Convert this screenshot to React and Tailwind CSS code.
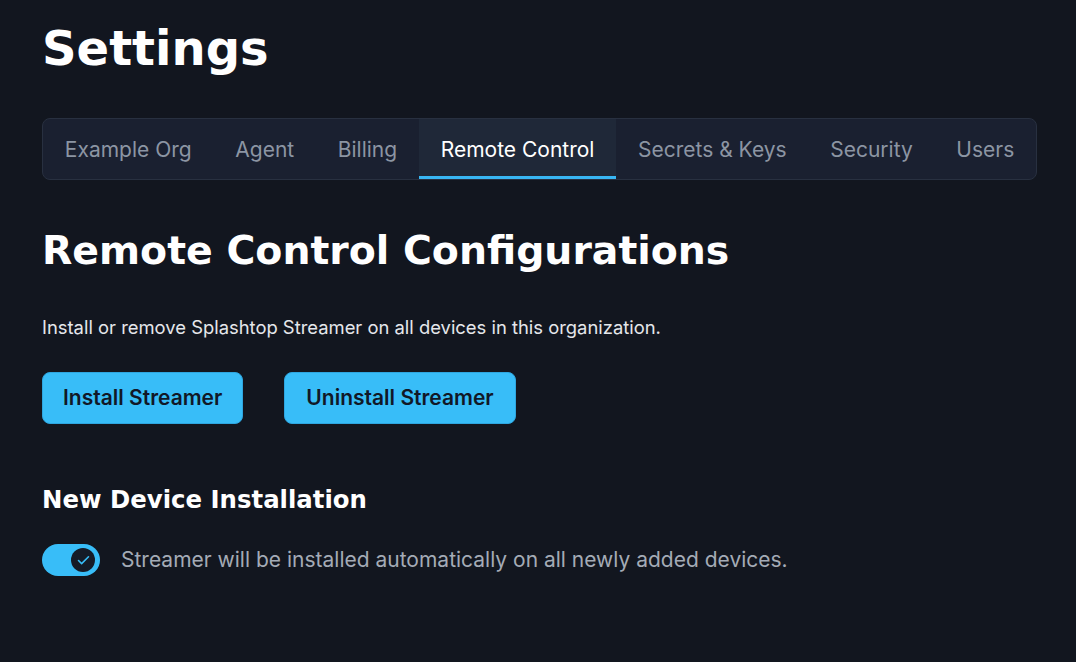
import React, { useState } from "react";
import { Check } from "lucide-react";

const tabs = ["Example Org", "Agent", "Billing", "Remote Control", "Secrets & Keys", "Security", "Users"];

export default function App() {
  const [active, setActive] = useState("Remote Control");
  const [autoInstall, setAutoInstall] = useState(true);

  return (
    <div className="min-h-screen bg-[#12161f] px-[42px] pt-[24px] font-['Inter',sans-serif] text-white">
      <h1 className="font-['DejaVu_Sans',sans-serif] text-[48px] font-bold leading-[48px]">
        Settings
      </h1>

      {/* tabs */}
      <div className="mt-[46px] flex w-fit overflow-hidden rounded-lg border border-[#283040] bg-[#1a2030]">
        {tabs.map((t) => (
          <button
            key={t}
            onClick={() => setActive(t)}
            className={
              "h-[60px] shrink-0 whitespace-nowrap border-b-[3px] px-[21.8px] pt-[4px] text-[21px] " +
              (active === t
                ? "border-[#38b6f4] bg-[#1f2838] text-white"
                : "border-transparent text-[#8c95a3]")
            }
          >
            {t}
          </button>
        ))}
      </div>

      <h2 className="mt-[50px] font-['DejaVu_Sans',sans-serif] text-[39.4px] font-bold leading-[40px]">
        Remote Control Configurations
      </h2>

      <p className="mt-[45px] text-[18.4px] leading-[24px] text-[#e5e7eb]">
        Install or remove Splashtop Streamer on all devices in this organization.
      </p>

      <div className="mt-[33px] flex gap-[41px]">
        <button className="h-[52px] rounded-lg border border-[#2ea6e0] bg-[#38bdf8] px-[20px] text-[21px] font-semibold text-[#111827]">
          Install Streamer
        </button>
        <button className="h-[52px] rounded-lg border border-[#2ea6e0] bg-[#38bdf8] px-[21px] text-[21px] font-semibold text-[#111827]">
          Uninstall Streamer
        </button>
      </div>

      <h3 className="mt-[60px] font-['DejaVu_Sans',sans-serif] text-[24.4px] font-bold leading-[32px]">
        New Device Installation
      </h3>

      <div className="mt-[28px] flex items-center gap-[21px]">
        <button
          onClick={() => setAutoInstall(!autoInstall)}
          className={
            "flex h-[32px] w-[58px] items-center rounded-full px-[5px] " +
            (autoInstall ? "justify-end bg-[#38bdf8]" : "justify-start bg-[#374151]")
          }
        >
          <span className="flex h-[24px] w-[24px] items-center justify-center rounded-full bg-[#151b27]">
            {autoInstall && <Check className="h-[15px] w-[15px] text-[#38bdf8]" strokeWidth={2.5} />}
          </span>
        </button>
        <span className="text-[21px] text-[#a4abb6]">
          Streamer will be installed automatically on all newly added devices.
        </span>
      </div>
    </div>
  );
}
